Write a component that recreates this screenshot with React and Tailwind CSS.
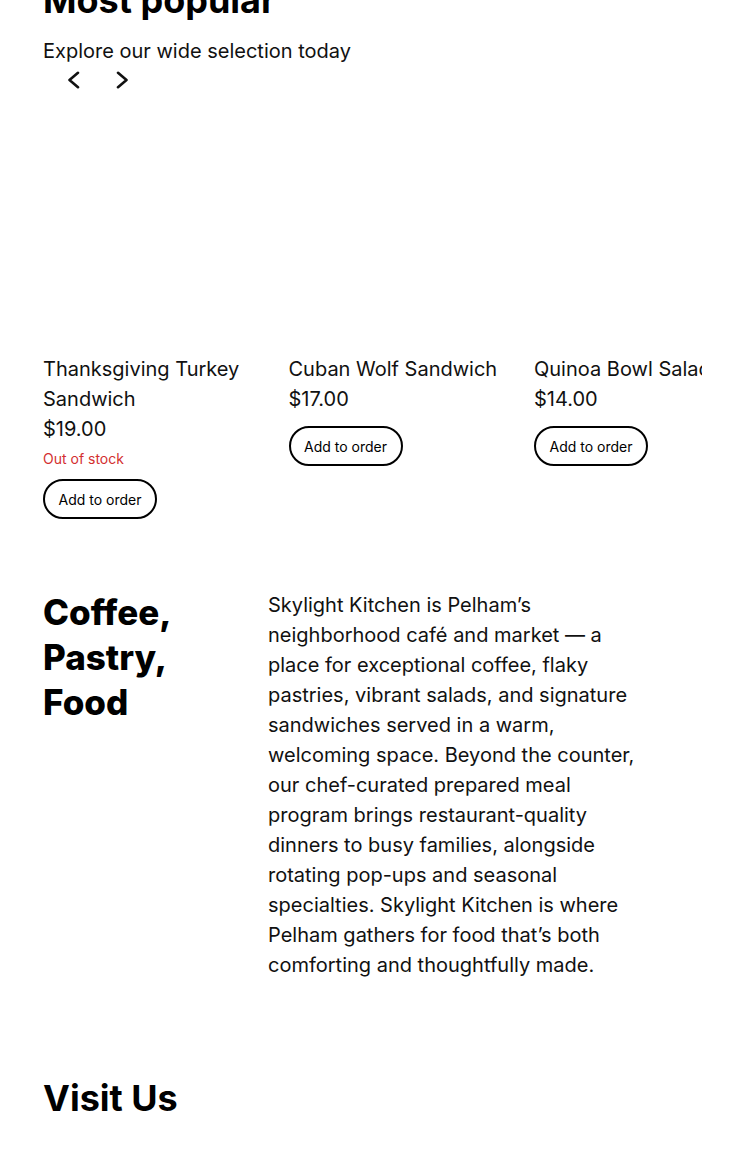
import React from "react";

function Chevron({ dir }) {
  return (
    <svg width="16" height="18" viewBox="0 0 16 18" fill="none">
      <path
        d={dir === "left" ? "M13 1.8 L4.5 9 L13 16.2" : "M3 1.8 L11.5 9 L3 16.2"}
        stroke="#111"
        strokeWidth="2.6"
        strokeLinecap="round"
        strokeLinejoin="round"
      />
    </svg>
  );
}

function Card({ title, price, oos }) {
  return (
    <div className="w-[215px] shrink-0">
      <div className="h-[215px] w-full bg-white" />
      <div className="mt-[15px]">
        <div className="text-[20px] leading-[30px] text-[#111]">{title}</div>
        <div className="text-[20px] leading-[30px] text-[#111]">{price}</div>
        {oos && (
          <div className="mt-[5px] text-[14px] leading-[20px] text-[#d32f2f]">Out of stock</div>
        )}
        <button
          className={`${oos ? "mt-[10px]" : "mt-[12px]"} flex h-[40px] w-[114px] items-center justify-center rounded-full border-2 border-black bg-white text-[14px] text-black`}
        >
          Add to order
        </button>
      </div>
    </div>
  );
}

export default function App() {
  return (
    <div
      className="min-h-[1154px] w-full overflow-hidden bg-white px-[43px] text-[#111]"
      style={{ fontFamily: "Inter, 'Noto Sans', sans-serif" }}
    >
      <h2 className="mt-[-22px] text-[36px] font-bold leading-[44px] text-black">Most popular</h2>
      <p className="mt-[14px] text-[20px] leading-[30px]">Explore our wide selection today</p>
      <div className="ml-[10px] flex h-[28px] items-center gap-[10px]">
        <button className="flex h-[28px] w-[40px] items-center justify-center">
          <Chevron dir="left" />
        </button>
        <button className="flex h-[28px] w-[40px] items-center justify-center">
          <Chevron dir="right" />
        </button>
      </div>
      <div className="mt-[30px] flex gap-[30.5px] overflow-hidden">
        <Card title="Thanksgiving Turkey Sandwich" price="$19.00" oos />
        <Card title="Cuban Wolf Sandwich" price="$17.00" />
        <Card title="Quinoa Bowl Salad" price="$14.00" />
        <Card title="Chicken Caesar Wrap" price="$15.00" />
      </div>
      <div className="mt-[71px] flex">
        <h2 className="w-[190px] shrink-0 text-[35px] font-extrabold leading-[45px] text-black">
          Coffee, Pastry, Food
        </h2>
        <p className="ml-[35px] w-[372px] text-[20px] leading-[30px]">
          Skylight Kitchen is Pelham’s neighborhood café and market — a place for exceptional
          coffee, flaky pastries, vibrant salads, and signature sandwiches served in a warm,
          welcoming space. Beyond the counter, our chef-curated prepared meal program brings
          restaurant-quality dinners to busy families, alongside rotating pop-ups and seasonal
          specialties. Skylight Kitchen is where Pelham gathers for food that’s both comforting and
          thoughtfully made.
        </p>
      </div>
      <h2 className="mt-[96px] text-[36px] font-bold leading-[44px] text-black">Visit Us</h2>
    </div>
  );
}
